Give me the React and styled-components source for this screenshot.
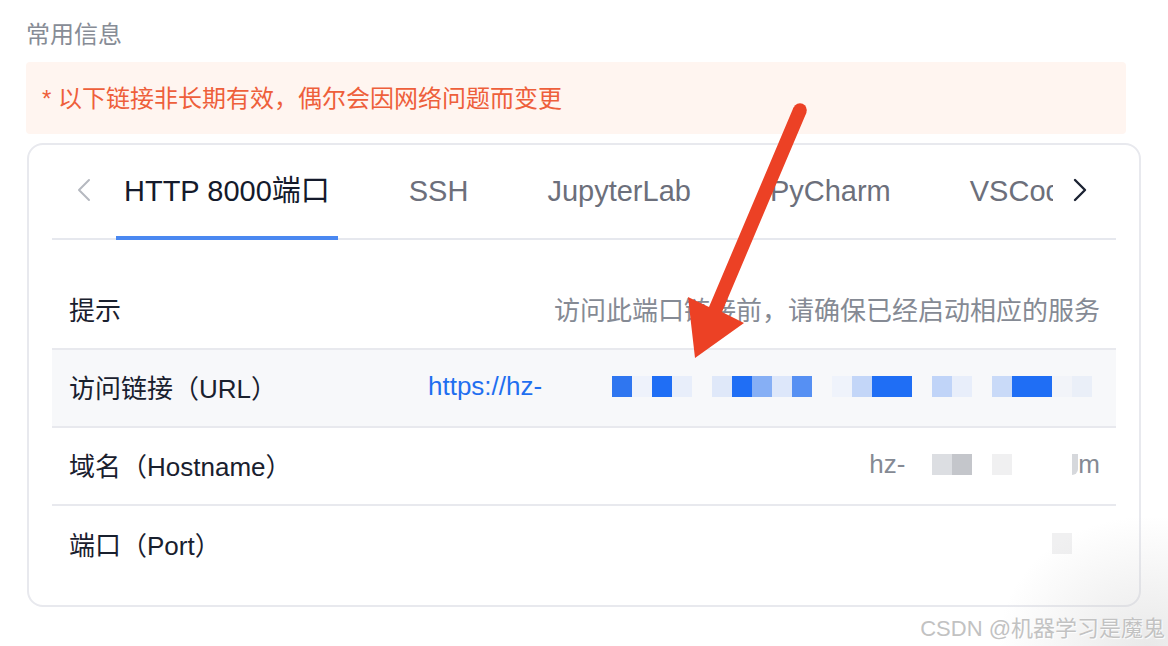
import React from 'react';
import styled, { createGlobalStyle } from 'styled-components';

const GlobalStyle = createGlobalStyle`
  html, body {
    margin: 0;
    padding: 0;
    background: #ffffff;
  }
  body {
    font-family: "Liberation Sans", "Noto Sans CJK SC", sans-serif;
  }
`;

const Page = styled.div`
  position: relative;
  width: 1168px;
  height: 646px;
  overflow: hidden;
  padding: 19px 0 0 26px;
  box-sizing: border-box;
`;

const SectionTitle = styled.div`
  font-size: 24px;
  line-height: 32px;
  color: #878c96;
  margin-bottom: 11px;
`;

const Notice = styled.div`
  width: 1100px;
  height: 72px;
  box-sizing: border-box;
  background: #fff5f0;
  border-radius: 4px;
  display: flex;
  align-items: center;
  padding: 0 0 3px 16px;
  font-size: 24px;
  color: #ee5f3b;
`;

const Card = styled.div`
  margin: 9px 0 0 1px;
  width: 1114px;
  height: 464px;
  box-sizing: border-box;
  border: 2px solid #e8e9ee;
  border-radius: 16px;
  padding: 0 23px;
`;

const TabBar = styled.div`
  height: 95px;
  display: flex;
  align-items: stretch;
  border-bottom: 2px solid #e6e8ee;
  box-sizing: border-box;
`;

const ArrowBtn = styled.div`
  flex: none;
  width: ${p => p.$w}px;
  display: flex;
  align-items: center;
  padding: 0 0 4px ${p => p.$pad}px;
  box-sizing: border-box;
`;

const TabList = styled.div`
  flex: 1;
  display: flex;
  gap: 63px;
  overflow: hidden;
  white-space: nowrap;
  margin-bottom: -2px;
`;

const Tab = styled.div`
  flex: none;
  padding: 0 8px;
  display: flex;
  align-items: center;
  font-size: 29px;
  line-height: 34px;
  color: ${p => (p.$active ? '#141a2b' : '#6c6f7b')};
  border-bottom: 4px solid ${p => (p.$active ? '#4a88f1' : 'transparent')};
  box-sizing: border-box;
`;

const Rows = styled.div`
  padding-top: 32px;
`;

const Row = styled.div`
  height: 78px;
  box-sizing: border-box;
  display: flex;
  align-items: center;
  justify-content: space-between;
  padding: 0 16px 3px 17px;
  background: ${p => (p.$shaded ? '#f7f8fa' : 'transparent')};
  border-bottom: ${p => (p.$last ? 'none' : '2px solid #e8e9ee')};
`;

const Label = styled.div`
  font-size: 26px;
  color: #19202e;
`;

const Value = styled.div`
  display: flex;
  align-items: center;
  font-size: 26px;
  color: #858a94;
`;

const LinkText = styled.span`
  display: inline-block;
  width: 124px;
  overflow: hidden;
  white-space: nowrap;
  color: #1f6ff0;
`;

const Blocks = styled.div`
  display: flex;
  margin-left: ${p => p.$ml || 0}px;
  margin-right: ${p => p.$mr || 0}px;
`;

const Block = styled.span`
  width: 20px;
  height: 21px;
  background: ${p => p.$c || 'transparent'};
`;

const Sliver = styled.span`
  width: ${p => p.$w}px;
  height: 21px;
  background: ${p => p.$c};
  border-radius: 0 0 6px 0;
`;

const Overlay = styled.svg`
  position: absolute;
  left: 0;
  top: 0;
  pointer-events: none;
`;

const Shade = styled.div`
  position: absolute;
  right: -130px;
  bottom: -130px;
  width: 300px;
  height: 260px;
  background: radial-gradient(closest-side, rgba(200, 200, 200, 0.4), rgba(255, 255, 255, 0));
  pointer-events: none;
`;

const Watermark = styled.div`
  position: absolute;
  right: 3px;
  bottom: 4px;
  font-size: 22px;
  color: #c2c2c2;
  text-shadow: 0 0 1px #fff, 1px 1px 1px rgba(255, 255, 255, 0.9);
`;

const Chevron = ({ dir, color, width }) => (
  <svg width={14} height={26} viewBox="0 0 14 26">
    <polyline
      points={dir === 'left' ? '12,3 2,13 12,23' : '2,3 12,13 2,23'}
      fill="none"
      stroke={color}
      strokeWidth={width}
      strokeLinecap="round"
      strokeLinejoin="round"
    />
  </svg>
);

const tabs = ['HTTP 8000端口', 'SSH', 'JupyterLab', 'PyCharm', 'VSCode'];

const urlBlocks = [
  null, null, null,
  '#2f76f0', '#eef2fb', '#1f6ef5', '#e8eefa', null,
  '#dfe8f9', '#1f6ef5', '#86aff5', '#dde7fa', '#5690f3', null,
  '#eff3fb', '#c3d6f8', '#1f6ef5', '#1f6ef5', null,
  '#c0d4f8', '#e8eefa', null,
  '#c9daf8', '#1f6ef5', '#1f6ef5', '#f2f4f9', '#eaeff8',
];

const hostBlocks = [null, '#dcdee2', '#c4c6cb', null, '#f0f0f1', null, null, null];

export default function App() {
  return (
    <>
      <GlobalStyle />
      <Page>
        <SectionTitle>常用信息</SectionTitle>
        <Notice>* 以下链接非长期有效，偶尔会因网络问题而变更</Notice>
        <Card>
          <TabBar>
            <ArrowBtn $w={64} $pad={25}>
              <Chevron dir="left" color="#b6b9c0" width={2} />
            </ArrowBtn>
            <TabList>
              {tabs.map((t, i) => (
                <Tab key={t} $active={i === 0}>{t}</Tab>
              ))}
            </TabList>
            <ArrowBtn $w={63} $pad={20}>
              <Chevron dir="right" color="#1c2333" width={2.4} />
            </ArrowBtn>
          </TabBar>
          <Rows>
            <Row>
              <Label>提示</Label>
              <Value>访问此端口链接前，请确保已经启动相应的服务</Value>
            </Row>
            <Row $shaded>
              <Label>访问链接（URL）</Label>
              <Value>
                <LinkText>https://hz-</LinkText>
                <Blocks $mr={8}>
                  {urlBlocks.map((c, i) => <Block key={i} $c={c} />)}
                </Blocks>
              </Value>
            </Row>
            <Row>
              <Label>域名（Hostname）</Label>
              <Value>
                hz-
                <Blocks $ml={7}>
                  {hostBlocks.map((c, i) => <Block key={i} $c={c} />)}
                </Blocks>
                <Sliver $w={6} $c="#d6d8dc" />
                m
              </Value>
            </Row>
            <Row $last>
              <Label>端口（Port）</Label>
              <Value>
                <Blocks $mr={28}>
                  <Block $c="#f0f0f1" />
                </Blocks>
              </Value>
            </Row>
          </Rows>
        </Card>
        <Shade />
        <Watermark>CSDN @机器学习是魔鬼</Watermark>
        <Overlay width={1168} height={646} viewBox="0 0 1168 646">
          <polygon
            points="793.6,107.3 806.4,112.7 722,312 744,323 695,358 688,297 709,307"
            fill="#ec4125"
          />
          <circle cx={800} cy={110} r={6.8} fill="#ec4125" />
        </Overlay>
      </Page>
    </>
  );
}
